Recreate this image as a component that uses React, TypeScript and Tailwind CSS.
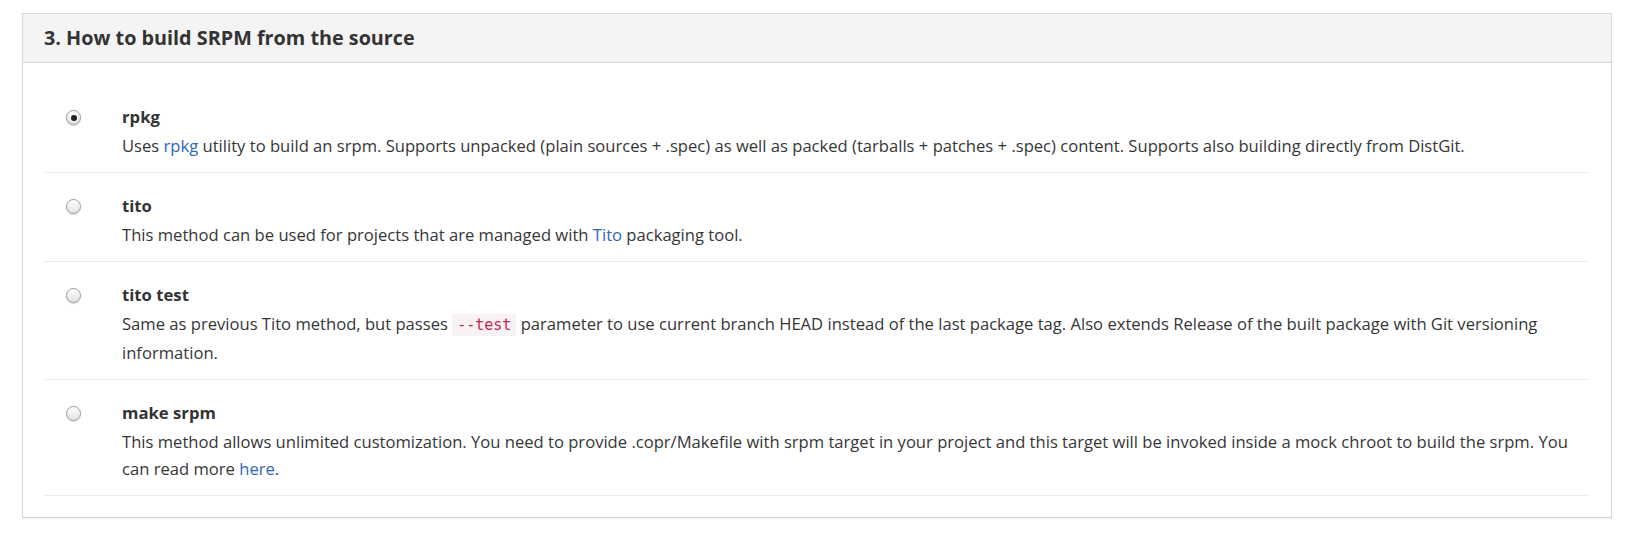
import React from "react";

const Radio = ({ checked }: { checked?: boolean }) => (
  <span className="mt-[8px] flex h-[15px] w-[15px] shrink-0 items-center justify-center rounded-full border border-[#9a9a9a] bg-gradient-to-b from-[#ffffff] to-[#e2e2e2] shadow-[0_1px_1px_rgba(0,0,0,0.15)]">
    {checked && <span className="h-[6px] w-[6px] rounded-full bg-[#222]" />}
  </span>
);

const Link = ({ children }: { children: React.ReactNode }) => (
  <a className="text-[#2f66bd]">{children}</a>
);

const Row = ({
  checked,
  title,
  children,
}: {
  checked?: boolean;
  title: string;
  children: React.ReactNode;
}) => (
  <div className="flex border-b border-[#ececec] pt-[18px] pb-[13px]">
    <div className="flex w-[78px] shrink-0 pl-[22px]">
      <Radio checked={checked} />
    </div>
    <div className="flex-1">
      <div className="text-[16.7px] font-bold leading-[30px] text-[#333]">{title}</div>
      <div className="text-[16.6px] leading-[27px] text-[#363636]">{children}</div>
    </div>
  </div>
);

export default function App() {
  return (
    <div
      className="bg-white pl-[22px] pr-[31px] pt-[13px] pb-[20px]"
      style={{ fontFamily: '"Open Sans", "Noto Sans", sans-serif' }}
    >
      <div className="border border-[#d6d6d6] shadow-[0_1px_1px_rgba(0,0,0,0.05)]">
        <div className="border-b border-[#d6d6d6] bg-[#f4f4f4] px-[21px] py-[10px]">
          <h3 className="text-[19.8px] font-bold leading-[28px] text-[#333]">
            3. How to build SRPM from the source
          </h3>
        </div>
        <div className="px-[21px] py-[21px]">
          <Row checked title="rpkg">
            Uses <Link>rpkg</Link> utility to build an srpm. Supports unpacked (plain sources + .spec) as well as packed (tarballs + patches + .spec) content. Supports also building directly from DistGit.
          </Row>
          <Row title="tito">
            This method can be used for projects that are managed with <Link>Tito</Link> packaging tool.
          </Row>
          <Row title="tito test">
            Same as previous Tito method, but passes{" "}
            <code
              className="rounded-[2px] bg-[#f9f2f4] px-[5px] py-[2px] text-[15px] text-[#c7254e]"
              style={{ fontFamily: '"DejaVu Sans Mono", "Liberation Mono", monospace' }}
            >
              --test
            </code>{" "}
            parameter to use current branch HEAD instead of the last package tag. Also extends Release of the built package with Git versioning information.
          </Row>
          <Row title="make srpm">
            This method allows unlimited customization. You need to provide .copr/Makefile with srpm target in your project and this target will be invoked inside a mock chroot to build the srpm. You can read more <Link>here</Link>.
          </Row>
        </div>
      </div>
    </div>
  );
}
